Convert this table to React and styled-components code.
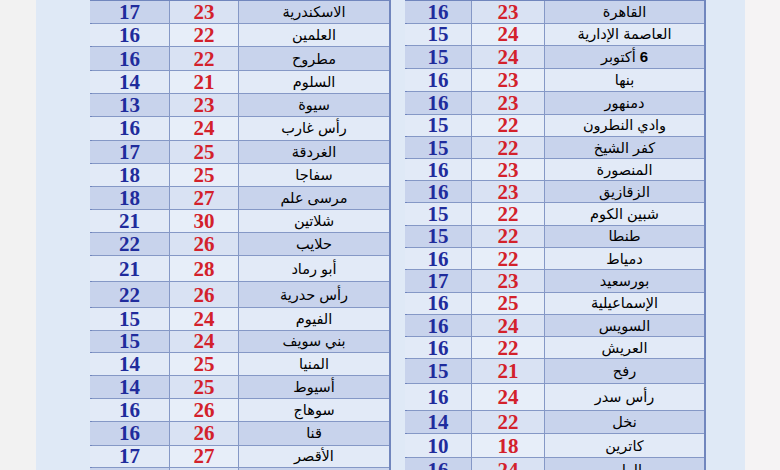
import React from "react";
import styled, { createGlobalStyle } from "styled-components";

const Global = createGlobalStyle`
  html, body { margin: 0; padding: 0; }
  body { width: 780px; height: 470px; overflow: hidden; background: #f2f2f2; }
`;

const Page = styled.div`
  display: flex;
  width: 780px;
  height: 470px;
  overflow: hidden;
`;

const SideStrip = styled.div`
  width: ${(p) => p.$w}px;
  flex: none;
  background: ${(p) => p.$bg};
`;

const Panel = styled.div`
  flex: none;
  width: 709px;
  height: 470px;
  background: #dfe9f6;
  display: flex;
  direction: rtl;
  gap: 14px;
  padding: 0 39px 0 54px;
  box-sizing: border-box;
  align-items: flex-start;
`;

const Table = styled.div`
  width: 301px;
  flex: none;
  display: flex;
  flex-direction: column;
  background: #8598c6;
  border: 2px solid #7186bd;
  border-top-width: 1px;
  gap: 1px;
  box-sizing: border-box;
`;

const Row = styled.div`
  display: grid;
  grid-template-columns: ${(p) => p.$cols};
  gap: 1px;
  height: ${(p) => p.$h}px;
  flex: none;
`;

const Cell = styled.div`
  display: flex;
  align-items: center;
  justify-content: center;
  min-height: 0;
  background: ${(p) =>
    p.$kind === "max"
      ? p.$dark ? "#d9e2f3" : "#e7eef9"
      : p.$dark ? "#c8d3ec" : "#e2eaf7"};
`;

const Name = styled.span`
  font-family: "Liberation Sans", "DejaVu Sans", sans-serif;
  font-size: 14.5px;
  color: #000;
  white-space: nowrap;
  line-height: 20px;
`;

const Num = styled.span`
  font-family: "Liberation Serif", serif;
  font-weight: bold;
  font-size: 21px;
  line-height: 22px;
  color: ${(p) => (p.$kind === "max" ? "#d3212b" : "#1f2c9c")};
`;

const BoldDigit = styled.b`
  font-weight: bold;
  font-size: 15px;
`;

const left = [
  ["الاسكندرية", 23, 17],
  ["العلمين", 22, 16],
  ["مطروح", 22, 16],
  ["السلوم", 21, 14],
  ["سيوة", 23, 13],
  ["رأس غارب", 24, 16],
  ["الغردقة", 25, 17],
  ["سفاجا", 25, 18],
  ["مرسى علم", 27, 18],
  ["شلاتين", 30, 21],
  ["حلايب", 26, 22],
  ["أبو رماد", 28, 21],
  ["رأس حدرية", 26, 22],
  ["الفيوم", 24, 15],
  ["بني سويف", 24, 15],
  ["المنيا", 25, 14],
  ["أسيوط", 25, 14],
  ["سوهاج", 26, 16],
  ["قنا", 26, 16],
  ["الأقصر", 27, 17],
  ["أسوان", 29, 18],
];

const right = [
  ["القاهرة", 23, 16],
  ["العاصمة الإدارية", 24, 15],
  ["6 أكتوبر", 24, 15],
  ["بنها", 23, 16],
  ["دمنهور", 23, 16],
  ["وادي النطرون", 22, 15],
  ["كفر الشيخ", 22, 15],
  ["المنصورة", 23, 16],
  ["الزقازيق", 23, 16],
  ["شبين الكوم", 22, 15],
  ["طنطا", 22, 15],
  ["دمياط", 22, 16],
  ["بورسعيد", 23, 17],
  ["الإسماعيلية", 25, 16],
  ["السويس", 24, 16],
  ["العريش", 22, 16],
  ["رفح", 21, 15],
  ["رأس سدر", 24, 16],
  ["نخل", 22, 14],
  ["كاترين", 18, 10],
  ["الطور", 24, 16],
];

const leftLines = [1, 24, 47, 71, 94, 117, 140.5, 163.5, 186.5, 209.5, 232.5, 256, 282, 308, 330.5, 353, 376, 399, 422, 445.5, 468, 492];
const rightLines = [1, 23.5, 46, 68.5, 91.5, 114.5, 137, 159, 181, 203, 225.5, 248, 270, 292.5, 315, 337, 359, 384, 411, 434, 458, 482];

function renderName(name) {
  if (name.startsWith("6 ")) {
    return (
      <Name>
        <BoldDigit>6</BoldDigit> {name.slice(2)}
      </Name>
    );
  }
  return <Name>{name}</Name>;
}

function CityTable({ rows, lines, cols }) {
  return (
    <Table>
      {rows.map(([name, max, min], i) => {
        const dark = i % 2 === 0;
        return (
          <Row key={name} $cols={cols} $h={lines[i + 1] - lines[i] - 1}>
            <Cell $dark={dark}>{renderName(name)}</Cell>
            <Cell $dark={dark} $kind="max">
              <Num $kind="max">{max}</Num>
            </Cell>
            <Cell $dark={dark}>
              <Num>{min}</Num>
            </Cell>
          </Row>
        );
      })}
    </Table>
  );
}

export default function App() {
  return (
    <>
      <Global />
      <Page>
        <SideStrip $w={36} $bg="#f2f2f2" />
        <Panel>
          <CityTable rows={right} lines={rightLines} cols="159px 72px 66px" />
          <CityTable rows={left} lines={leftLines} cols="150px 68px 79px" />
        </Panel>
        <SideStrip $w={35} $bg="#f5f3f4" />
      </Page>
    </>
  );
}
